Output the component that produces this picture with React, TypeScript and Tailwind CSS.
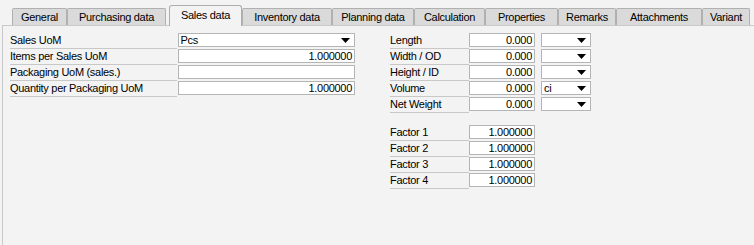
const tabs = [
  { label: 'General', w: 'w-[55px]' },
  { label: 'Purchasing data', w: 'w-[99px]' },
  { label: 'Sales data', w: 'w-[73px]', active: true },
  { label: 'Inventory data', w: 'w-[90px]' },
  { label: 'Planning data', w: 'w-[82px]' },
  { label: 'Calculation', w: 'w-[71px]' },
  { label: 'Properties', w: 'w-[73px]' },
  { label: 'Remarks', w: 'w-[58px]' },
  { label: 'Attachments', w: 'w-[86px]' },
  { label: 'Variant', w: 'w-[48px]' },
];

const Arrow = () => (
  <svg width="9" height="5" viewBox="0 0 9 5" className="shrink-0">
    <path d="M0 0h9L4.5 5z" fill="#000" />
  </svg>
);

const Input = ({ value = '', w, left = false }: { value?: string; w: string; left?: boolean }) => (
  <div
    className={`${w} h-[14px] border border-[#b5b5b5] bg-white flex items-center px-[2px] leading-none ${
      left ? 'justify-start' : 'justify-end'
    }`}
  >
    {value}
  </div>
);

const Select = ({ value = '', w }: { value?: string; w: string }) => (
  <div className={`${w} h-[14px] border border-[#b5b5b5] bg-white flex items-center justify-between pl-[2px] pr-[4px] leading-none`}>
    <span>{value}</span>
    <Arrow />
  </div>
);

const Label = ({ text, w }: { text: string; w: string }) => (
  <div className={`${w} h-[16px] border-b border-[#c8c8c8] flex items-start pt-[1px] leading-[13px]`}>{text}</div>
);

const dims = [
  { label: 'Length', unit: '' },
  { label: 'Width / OD', unit: '' },
  { label: 'Height / ID', unit: '' },
  { label: 'Volume', unit: 'ci' },
  { label: 'Net Weight', unit: '' },
];

export default function App() {
  return (
    <div className="w-[754px] h-[245px] overflow-hidden bg-[#f3f3f3] text-[11px] tracking-[-0.3px] text-black font-['Liberation_Sans',Arial,sans-serif]">
      <div className="flex items-end h-[25px] pl-[12px]">
        {tabs.map((t) =>
          t.active ? (
            <div
              key={t.label}
              className={`${t.w} ml-[3px] h-[21px] -mb-px relative z-10 border border-b-0 border-[#adadad] rounded-t-[3px] bg-[#f3f3f3] flex items-center justify-center pb-[1px]`}
            >
              {t.label}
            </div>
          ) : (
            <div
              key={t.label}
              className={`${t.w} h-[17px] border border-b-0 border-[#b0b0b0] rounded-t-[2px] bg-[#dadada] flex items-center justify-center`}
            >
              {t.label}
            </div>
          )
        )}
      </div>
      <div className="ml-[2px] h-[220px] border-l border-t border-[#c9c9c9] flex pt-[7px] pl-[7px]">
        <div className="flex flex-col w-[345px]">
          <div className="flex gap-[1px]">
            <Label text="Sales UoM" w="w-[167px]" />
            <Select value="Pcs" w="w-[178px]" />
          </div>
          <div className="flex gap-[1px]">
            <Label text="Items per Sales UoM" w="w-[167px]" />
            <Input value="1.000000" w="w-[178px]" />
          </div>
          <div className="flex gap-[1px]">
            <Label text="Packaging UoM (sales.)" w="w-[167px]" />
            <Input w="w-[178px]" />
          </div>
          <div className="flex gap-[1px]">
            <Label text="Quantity per Packaging UoM" w="w-[167px]" />
            <Input value="1.000000" w="w-[178px]" />
          </div>
        </div>
        <div className="flex flex-col ml-[35px]">
          {dims.map((d) => (
            <div key={d.label} className="flex">
              <Label text={d.label} w="w-[79px]" />
              <Input value="0.000" w="w-[66px]" />
              <div className="ml-[6px]">
                <Select value={d.unit} w="w-[50px]" />
              </div>
            </div>
          ))}
          <div className="flex flex-col mt-[12px]">
            {['Factor 1', 'Factor 2', 'Factor 3', 'Factor 4'].map((f) => (
              <div key={f} className="flex">
                <Label text={f} w="w-[79px]" />
                <Input value="1.000000" w="w-[66px]" />
              </div>
            ))}
          </div>
        </div>
      </div>
    </div>
  );
}
